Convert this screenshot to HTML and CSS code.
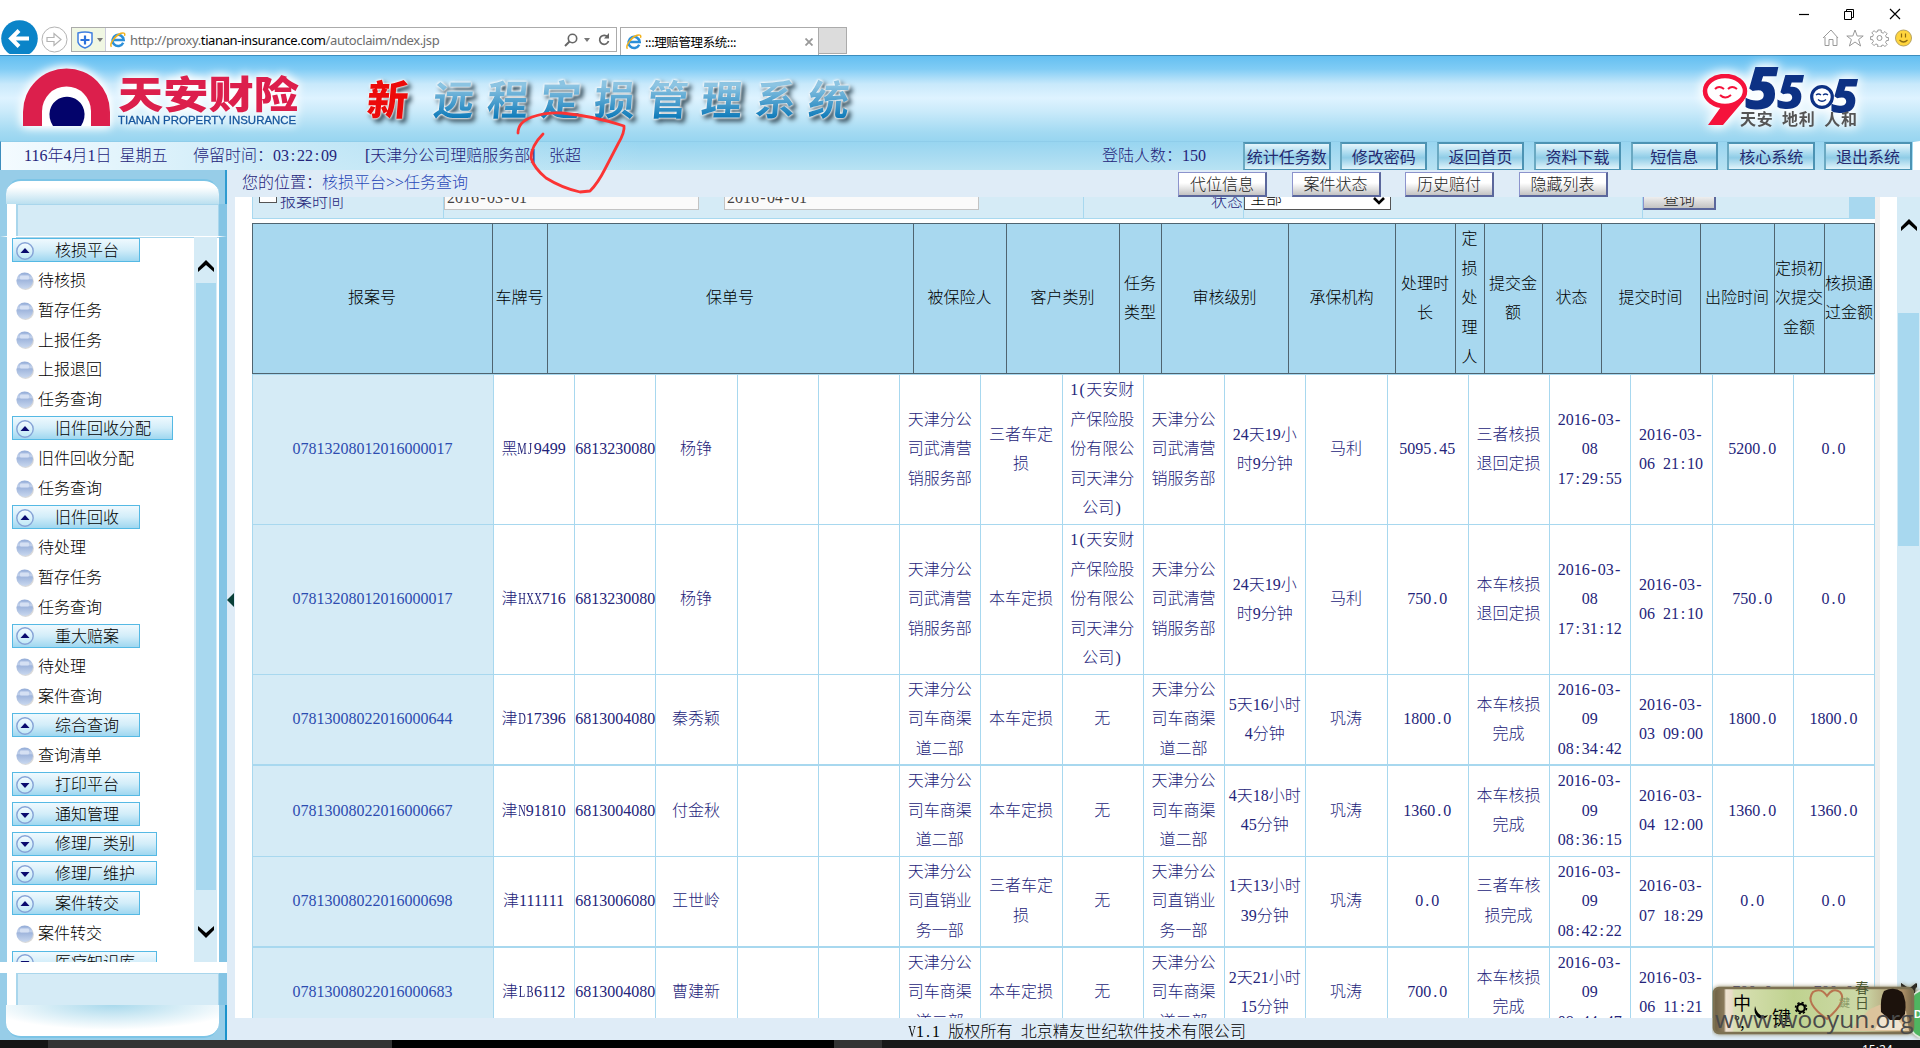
FILE: index.html
```html
<!DOCTYPE html>
<html lang="zh-CN">
<head>
<meta charset="utf-8">
<title>:::理赔管理系统:::</title>
<link rel="stylesheet" href="styles.css">
</head>
<body>
<svg class="defs" width="0" height="0">
  <defs>
    <linearGradient id="gBall" x1="0" y1="0" x2="0" y2="1"><stop offset="0" stop-color="#8fa9d6"/><stop offset=".35" stop-color="#c3d2ec"/><stop offset=".45" stop-color="#9fb5dc"/><stop offset="1" stop-color="#c9d8ef"/></linearGradient>
    <linearGradient id="gRing" x1="0" y1="0" x2="0" y2="1"><stop offset="0" stop-color="#f4fbff"/><stop offset="1" stop-color="#bfe8f6"/></linearGradient>
    <symbol id="ball" viewBox="0 0 18 18"><circle cx="9.5" cy="9.6" r="8.4" fill="#c9c9c9" opacity=".7"/><circle cx="8.7" cy="8.7" r="8.3" fill="url(#gBall)"/><rect x="4" y="3.5" width="9" height="4" rx="1" fill="#d5e0f3"/></symbol>
    <symbol id="up" viewBox="0 0 18 18"><circle cx="9" cy="9" r="8.2" fill="url(#gRing)" stroke="#86a3d6" stroke-width="1.4"/><path d="M4.500 11 9 6l4.500 5z" fill="#0a0a6e"/></symbol>
    <symbol id="down" viewBox="0 0 18 18"><circle cx="9" cy="9" r="8.200" fill="url(#gRing)" stroke="#86a3d6" stroke-width="1.4"/><path d="M4.500 7 9 12l4.500-5z" fill="#0a0a6e"/></symbol>
    <symbol id="ie" viewBox="0 0 16 16"><path d="M13.200 10.800A5.600 5.600 0 1 1 13.700 8H4" fill="none" stroke="#2b8fd9" stroke-width="2.500"/><path d="M1.500 14.800C-1 12 5 3.500 11 1.300c3-1 4.500 0 3.400 2.600" fill="none" stroke="#f2b21d" stroke-width="1.500"/></symbol>
    <symbol id="chevUp" viewBox="0 0 16 12"><path d="M0 12V8l8-8 8 8v4L8 5z" fill="#000"/></symbol>
    <symbol id="chevDown" viewBox="0 0 16 12"><path d="M0 0v4l8 8 8-8V0L8 7z" fill="#000"/></symbol>
  </defs>
</svg>

<div class="browser">
  <div class="nav-area">
    <svg class="back" width="37" height="34" viewBox="0 0 37 34"><circle cx="18.500" cy="18.500" r="18.300" fill="#0b84c8"/><path d="M28 18.500H10M18 10.500l-8 8 8 8" fill="none" stroke="#fff" stroke-width="4"/></svg>
    <svg class="fwd" width="27" height="27" viewBox="0 0 27 27"><circle cx="13.500" cy="13.500" r="12.500" fill="#fff" stroke="#b3b3b3"/><path d="M6 11.500h7V7.500l7 6-7 6v-4H6z" fill="none" stroke="#b3b3b3" stroke-width="1.200"/></svg>
    <div class="address">
      <div class="shield"><svg width="16" height="18" viewBox="0 0 16 18"><path d="M1 2q7-2 14 0v9q-1 4-7 6-6-2-7-6z" fill="#fff" stroke="#3f7fe0" stroke-width="1.500"/><path d="M8 4.500v9M3.500 9h9" stroke="#2d72dc" stroke-width="2.200"/></svg><b class="caret"></b></div>
      <svg class="ie" width="16" height="16"><use href="#ie"/></svg>
      <span class="url">http://proxy.<em>tianan-insurance.com</em>/autoclaim/ndex.jsp</span>
      <svg width="14" height="14" viewBox="0 0 14 14" class="glass"><circle cx="8.500" cy="5.500" r="4.200" fill="none" stroke="#666" stroke-width="1.600"/><path d="M5.500 8.500 1 13" stroke="#666" stroke-width="2"/></svg>
      <b class="caret dark"></b>
      <svg width="12" height="13" viewBox="0 0 12 13" class="reload"><path d="M10 4.500A4.500 4.500 0 1 0 10.500 8" fill="none" stroke="#666" stroke-width="1.700"/><path d="M11 0v5.500H6z" fill="#666"/></svg>
    </div>
    <div class="tab"><svg width="16" height="16"><use href="#ie"/></svg><span>:::理赔管理系统:::</span><svg class="close" width="8" height="8" viewBox="0 0 8 8"><path d="M.5.5l7 7M7.500.5l-7 7" stroke="#999" stroke-width="1.800"/></svg></div>
    <div class="newtab"></div>
  </div>
  <div class="window-tools">
    <svg width="110" height="14" viewBox="0 0 110 14"><path d="M3 7.500h10" stroke="#000" stroke-width="1.200"/><path d="M48.500 4.500h7v8h-7zM50.500 4.500v-2h7v8h-2" fill="none" stroke="#000"/><path d="M94 2l10 10M104 2 94 12" stroke="#000" stroke-width="1.200"/></svg>
    <svg width="92" height="18" viewBox="0 0 92 18"><g fill="none" stroke="#999"><path d="M1 9 9 1l7 8M3 8v8.500h4v-6h4v6h4V8"/><path d="M33 1l2.200 6h6l-4.600 3.500 2 6.500-5.600-4-5.600 4 2-6.500L24.800 7h6z"/><circle cx="57.500" cy="9" r="2.500"/><path d="M55.800 1h3.400v2.300l2 .9 1.700-1.700 2.300 2.300-1.600 1.700.8 2h2v3l-2 .1-.8 2 1.600 1.700-2.300 2.300-1.700-1.700-2 .9V18h-3.400v-2.200l-2-.9-1.700 1.700-2.300-2.300 1.600-1.700-.8-2h-2v-3h2l.8-2-1.600-1.700 2.300-2.300 1.700 1.700 2-.9z"/></g><circle cx="81.500" cy="9" r="8" fill="#ffd53e" stroke="#b6a262"/><path d="M79.500 4.500v4M83.500 4.500v4M77.500 11q4 4 8 0" stroke="#8b6a12" fill="none" stroke-width="1.200"/></svg>
  </div>
</div>

<header class="banner">
  <svg class="logo-mark" width="88" height="60" viewBox="0 0 88 60"><path d="M0 58V44a43.500 43.500 0 0 1 87 0v14H66V44a22 22 0 0 0-45 0v14z" fill="#dc1f4c"/><path d="M19 58V43a24 24 0 0 1 49 0v15z" fill="#fff"/><path d="M30 58q-5-8-3-16a17.500 17.500 0 0 1 34 0q2 8-3 16z" fill="#03036b"/></svg>
  <div class="brand"><div class="brand-cn">天安财险</div><div class="brand-en">TIANAN PROPERTY INSURANCE</div></div>
  <div class="sys-title"><span class="hot">新</span><span>远</span><span>程</span><span>定</span><span>损</span><span>管</span><span>理</span><span>系</span><span>统</span></div>
  <div class="hotline">
    <div class="digits">
      <svg class="nine" width="46" height="53" viewBox="0 0 46 53"><path d="M6 51 21 30 45 14Q46 22 38 31L21 51z" fill="#f5123b"/><ellipse cx="23" cy="17" rx="20" ry="15" fill="#fff" stroke="#f5123b" stroke-width="4.500"/><path d="M13 15q4-4 9 0M26 15q4-4 9 0M18 21q5 5 11 0" fill="none" stroke="#f5123b" stroke-width="2"/></svg>
      <span class="d5 a">5</span><span class="d5 b">5</span>
      <svg class="zero" width="28" height="24" viewBox="0 0 28 24"><circle cx="14" cy="12" r="10.300" fill="#fff" stroke="#0d3184" stroke-width="3.200"/><path d="M8 10q2.500-2 5 0M15 10q2.500-2 5 0M10 14.500q4 3.500 8 0" fill="none" stroke="#0d3184" stroke-width="1.300"/></svg>
      <span class="d5 c">5</span>
    </div>
    <div class="motto">天安&ensp;地利&ensp;人和</div>
  </div>
</header>

<div class="infobar">
  <span class="t-date">116年4月1日&ensp;星期五</span><span class="t-stay">停留时间：03<i>:</i>22<i>:</i>09</span><span class="t-dept">[天津分公司理赔服务部]</span><span class="t-user">张超</span><span class="t-count">登陆人数：150</span>
  <nav class="topnav"><a>统计任务数</a><a>修改密码</a><a>返回首页</a><a>资料下载</a><a>短信息</a><a>核心系统</a><a>退出系统</a></nav>
</div>

<div class="main">
  <aside class="side">
    <div class="cap-top"></div>
    <div class="box"></div>
    <div class="menu">
      <ul>
        <li class="h"><svg><use href="#up"/></svg><span>核损平台</span></li>
        <li><svg><use href="#ball"/></svg>待核损</li>
        <li><svg><use href="#ball"/></svg>暂存任务</li>
        <li><svg><use href="#ball"/></svg>上报任务</li>
        <li><svg><use href="#ball"/></svg>上报退回</li>
        <li><svg><use href="#ball"/></svg>任务查询</li>
        <li class="h w6"><svg><use href="#up"/></svg><span>旧件回收分配</span></li>
        <li><svg><use href="#ball"/></svg>旧件回收分配</li>
        <li><svg><use href="#ball"/></svg>任务查询</li>
        <li class="h"><svg><use href="#up"/></svg><span>旧件回收</span></li>
        <li><svg><use href="#ball"/></svg>待处理</li>
        <li><svg><use href="#ball"/></svg>暂存任务</li>
        <li><svg><use href="#ball"/></svg>任务查询</li>
        <li class="h"><svg><use href="#up"/></svg><span>重大赔案</span></li>
        <li><svg><use href="#ball"/></svg>待处理</li>
        <li><svg><use href="#ball"/></svg>案件查询</li>
        <li class="h"><svg><use href="#up"/></svg><span>综合查询</span></li>
        <li><svg><use href="#ball"/></svg>查询清单</li>
        <li class="h"><svg><use href="#down"/></svg><span>打印平台</span></li>
        <li class="h"><svg><use href="#down"/></svg><span>通知管理</span></li>
        <li class="h w5"><svg><use href="#down"/></svg><span>修理厂类别</span></li>
        <li class="h w5"><svg><use href="#down"/></svg><span>修理厂维护</span></li>
        <li class="h"><svg><use href="#up"/></svg><span>案件转交</span></li>
        <li><svg><use href="#ball"/></svg>案件转交</li>
        <li class="h w5"><svg><use href="#down"/></svg><span>医疗知识库</span></li>
      </ul>
      <div class="scroll"><svg class="arr"><use href="#chevUp"/></svg><div class="thumb"></div><svg class="arr"><use href="#chevDown"/></svg></div>
    </div>
    <div class="gap"></div>
    <div class="box"></div>
    <div class="cap-bottom"></div>
  </aside>
  <section class="content">
    <div class="crumb">您的位置：<a>核损平台&gt;&gt;任务查询</a>
      <div class="tools"><button>代位信息</button><button>案件状态</button><button>历史赔付</button><button>隐藏列表</button></div>
    </div>
    <div class="pane">
      <div class="split"><svg width="7" height="14" viewBox="0 0 7 14"><path d="M7 0v14L0 7z" fill="#0a4038"/></svg></div>
      <div class="work">
        <div class="filter">
          <div class="f1"><b class="check"></b>报案时间</div>
          <div class="f2"><span class="inp">2016<i>-</i>03<i>-</i>01</span><span class="inp">2016<i>-</i>04<i>-</i>01</span></div>
          <div class="f3">状态</div>
          <div class="f4"><span class="sel">全部<svg width="12" height="8" viewBox="0 0 12 8"><path d="M1 1l5 5 5-5" fill="none" stroke="#000" stroke-width="2.600"/></svg></span></div>
          <div class="f5"><span class="query">查询</span></div>
          <div class="f6"></div>
        </div>
        <table class="head">
          <colgroup><col style="width:240px"><col style="width:55px"><col style="width:366px"><col style="width:93px"><col style="width:113px"><col style="width:42px"><col style="width:127px"><col style="width:107px"><col style="width:60px"><col style="width:29px"><col style="width:58px"><col style="width:59px"><col style="width:99px"><col style="width:74px"><col style="width:50px"><col style="width:50px"></colgroup>
          <tr><th>报案号</th><th>车牌号</th><th>保单号</th><th>被保险人</th><th>客户类别</th><th>任务<br>类型</th><th>审核级别</th><th>承保机构</th><th>处理时<br>长</th><th>定<br>损<br>处<br>理<br>人</th><th>提交金<br>额</th><th>状态</th><th>提交时间</th><th>出险时间</th><th>定损初<br>次提交<br>金额</th><th>核损通<br>过金额</th></tr>
        </table>
        <table class="list">
          <colgroup><col class="c0"><col span="17" class="cn"></colgroup>
          <tr class="tall"><td>07813208012016000017</td><td>黑<u>M</u><u>J</u>9499</td><td>6813230080</td><td>杨铮</td><td></td><td></td><td>天津分公<br>司武清营<br>销服务部</td><td>三者车定<br>损</td><td>1<i>(</i>天安财<br>产保险股<br>份有限公<br>司天津分<br>公司<i>)</i></td><td>天津分公<br>司武清营<br>销服务部</td><td>24天19小<br>时9分钟</td><td>马利</td><td>5095<i>.</i>45</td><td>三者核损<br>退回定损</td><td>2016<i>-</i>03<i>-</i><br>08<br>17<i>:</i>29<i>:</i>55</td><td>2016<i>-</i>03<i>-</i><br>06<i></i>21<i>:</i>10</td><td>5200<i>.</i>0</td><td>0<i>.</i>0</td></tr>
          <tr class="tall"><td>07813208012016000017</td><td>津<u>H</u><u>X</u><u>X</u>716</td><td>6813230080</td><td>杨铮</td><td></td><td></td><td>天津分公<br>司武清营<br>销服务部</td><td>本车定损</td><td>1<i>(</i>天安财<br>产保险股<br>份有限公<br>司天津分<br>公司<i>)</i></td><td>天津分公<br>司武清营<br>销服务部</td><td>24天19小<br>时9分钟</td><td>马利</td><td>750<i>.</i>0</td><td>本车核损<br>退回定损</td><td>2016<i>-</i>03<i>-</i><br>08<br>17<i>:</i>31<i>:</i>12</td><td>2016<i>-</i>03<i>-</i><br>06<i></i>21<i>:</i>10</td><td>750<i>.</i>0</td><td>0<i>.</i>0</td></tr>
          <tr class="r3"><td>07813008022016000644</td><td>津<u>D</u>17396</td><td>6813004080</td><td>秦秀颖</td><td></td><td></td><td>天津分公<br>司车商渠<br>道二部</td><td>本车定损</td><td>无</td><td>天津分公<br>司车商渠<br>道二部</td><td>5天16小时<br>4分钟</td><td>巩涛</td><td>1800<i>.</i>0</td><td>本车核损<br>完成</td><td>2016<i>-</i>03<i>-</i><br>09<br>08<i>:</i>34<i>:</i>42</td><td>2016<i>-</i>03<i>-</i><br>03<i></i>09<i>:</i>00</td><td>1800<i>.</i>0</td><td>1800<i>.</i>0</td></tr>
          <tr class="r4"><td>07813008022016000667</td><td>津<u>N</u>91810</td><td>6813004080</td><td>付金秋</td><td></td><td></td><td>天津分公<br>司车商渠<br>道二部</td><td>本车定损</td><td>无</td><td>天津分公<br>司车商渠<br>道二部</td><td>4天18小时<br>45分钟</td><td>巩涛</td><td>1360<i>.</i>0</td><td>本车核损<br>完成</td><td>2016<i>-</i>03<i>-</i><br>09<br>08<i>:</i>36<i>:</i>15</td><td>2016<i>-</i>03<i>-</i><br>04<i></i>12<i>:</i>00</td><td>1360<i>.</i>0</td><td>1360<i>.</i>0</td></tr>
          <tr class="r3"><td>07813008022016000698</td><td>津111111</td><td>6813006080</td><td>王世岭</td><td></td><td></td><td>天津分公<br>司直销业<br>务一部</td><td>三者车定<br>损</td><td>无</td><td>天津分公<br>司直销业<br>务一部</td><td>1天13小时<br>39分钟</td><td>巩涛</td><td>0<i>.</i>0</td><td>三者车核<br>损完成</td><td>2016<i>-</i>03<i>-</i><br>09<br>08<i>:</i>42<i>:</i>22</td><td>2016<i>-</i>03<i>-</i><br>07<i></i>18<i>:</i>29</td><td>0<i>.</i>0</td><td>0<i>.</i>0</td></tr>
          <tr class="r4"><td>07813008022016000683</td><td>津<u>L</u><u>B</u>6112</td><td>6813004080</td><td>曹建新</td><td></td><td></td><td>天津分公<br>司车商渠<br>道二部</td><td>本车定损</td><td>无</td><td>天津分公<br>司车商渠<br>道二部</td><td>2天21小时<br>15分钟</td><td>巩涛</td><td>700<i>.</i>0</td><td>本车核损<br>完成</td><td>2016<i>-</i>03<i>-</i><br>09<br>08<i>:</i>44<i>:</i>47</td><td>2016<i>-</i>03<i>-</i><br>06<i></i>11<i>:</i>21</td><td>700<i>.</i>0</td><td>700<i>.</i>0</td></tr>
        </table>
      </div>
      <div class="edge"></div>
      <div class="mscroll"><svg class="arr"><use href="#chevUp"/></svg><div class="thumb"></div><svg class="arr"><use href="#chevDown"/></svg></div>
    </div>
    <footer><u>V</u>1<i>.</i>1<i></i>版权所有<i></i>北京精友世纪软件技术有限公司</footer>
  </section>
</div>
<div class="taskbar"><b></b><b></b><b></b><b></b><b></b><span>15:24</span></div>

<svg class="scribble" width="120" height="90" viewBox="510 108 120 90"><path d="M518 133Q518 122 532 117 546 112 562 113 594 116 624 126 625 132 618 144L605 169Q598 183 590 191L580 192Q562 188 546 178 534 168 531 158 531 146 543 134" fill="none" stroke="#fb3434" stroke-width="2.800" stroke-linecap="round" stroke-linejoin="round"/></svg>

<div class="ime">
  <svg width="208" height="60" viewBox="0 0 208 60">
    <defs><linearGradient id="gi" x1="0" x2="1"><stop offset="0" stop-color="#6d6044"/><stop offset=".05" stop-color="#8a7a5c"/><stop offset=".06" stop-color="#efe3d2"/><stop offset=".09" stop-color="#e9dcc8"/><stop offset=".1" stop-color="#d9e0b4"/><stop offset=".4" stop-color="#bfd28f"/><stop offset=".75" stop-color="#cdd9a8"/><stop offset=".95" stop-color="#a98d66"/><stop offset="1" stop-color="#7a6a4a"/></linearGradient></defs>
    <ellipse cx="212" cy="34" rx="17" ry="24" fill="#4fb560" stroke="#dfe8df" stroke-width="1.500"/>
    <path d="M189 3l6 4h4l5-4-1 10h-10z" fill="#2d2a24"/>
    <rect x="2" y="8" width="199" height="45" rx="5" fill="url(#gi)" stroke="#7d7152" stroke-width="2.500"/>
    <path d="M138 51q6-8 20-22l14-6 22 8 3 20z" fill="#dcc39c"/><path d="M163 50q4-12 12-18 12 6 18 18z" fill="#f0e4d0"/><path d="M172 11q10-5 18 1 5 8 3 22l-5 6h-10l-9-8q-1-14 3-21z" fill="#1c120c"/>
    <path d="M115 42Q92 26 101 15q8-5 14 4 6-9 13-4 8 9-13 27z" transform="translate(0 -3)" fill="none" stroke="#b8744f" stroke-width="2"/>
    <path d="M43 26q3 13 13 9-3 5-9 3-6-4-4-12z" fill="#000"/><circle cx="89" cy="28" r="3.800" fill="none" stroke="#000" stroke-width="2.200"/><circle cx="89" cy="28" r="5.500" fill="none" stroke="#000" stroke-width="1.600" stroke-dasharray="2.200 2.100"/>
  </svg>
  <span class="zh">中</span><span class="punct">°,</span><span class="key">键</span><span class="spring">春<br>日</span><span class="faint">鍵</span><span class="dee">D</span>
</div>
<div class="mark">www.wooyun.org</div>
</body>
</html>
```
FILE: styles.css
```css
* { box-sizing: border-box; }
body { margin: 0; width: 1920px; height: 1048px; overflow: hidden; position: relative; background: #fff; color: #24247a; font: 300 16px/29.600px "Liberation Serif", "Noto Sans CJK SC", serif; }
i { display: inline-block; width: 8px; font-style: normal; text-align: center; }
u { display: inline-flex; justify-content: center; width: 8px; text-decoration: none; transform: scaleX(.66); }
ul { list-style: none; margin: 0; padding: 0; }
svg { display: block; flex: none; }
.defs { position: absolute; }

.browser { height: 55px; display: flex; justify-content: space-between; }
.nav-area { display: flex; align-items: flex-start; padding: 20px 0 0 1px; }
.fwd { margin: 6px 0 0 3px; }
.address { width: 546px; height: 25px; margin: 7px 0 0 3px; border: 1px solid #ababab; display: flex; align-items: center; font: 13px/22px "Noto Sans", sans-serif; color: #6d6d6d; }
.shield { width: 34px; height: 23px; background: #f0f7e3; display: flex; align-items: center; padding-left: 5px; gap: 4px; border-right: 1px solid #ccd; }
.caret { border: 3px solid transparent; border-top: 4px solid #777; border-bottom: 0; }
.ie { margin-left: 4px; }
.url { margin-left: 4px; letter-spacing: -.38px; white-space: nowrap; width: 434px; }
.url em { font-style: normal; color: #000; }
.caret.dark { margin: 0 8px 0 6px; }
.tab { width: 199px; height: 28px; margin: 7px 0 0 3px; border: 1px solid #ababab; border-bottom: 0; display: flex; align-items: center; padding-left: 5px; gap: 3px; color: #000; font: 12.500px "Noto Sans CJK SC", sans-serif; }
.tab span { width: 157px; letter-spacing: -.4px; }
.newtab { width: 28px; height: 27px; margin-top: 7px; background: #dcdcdc; border: 1px solid #ababab; border-left: 0; }
.window-tools { width: 124px; padding: 7px 0 0; }
.window-tools svg + svg { margin: 8px 0 0 26px; }

.banner { height: 86px; border-top: 1px solid #3d8dbd; display: flex; background: linear-gradient(#64bff1 0, #80ccf5 13px, #c8e9fb 28px, #def3ff 42px, #c9eafa 56px, #a3daf2 76px, #98d5f0); }
.logo-mark { margin: 12px 0 0 23px; filter: drop-shadow(0 0 4px #fff) drop-shadow(0 0 5px #fff); }
.brand { width: 256px; padding: 17px 0 0 7px; flex: none; filter: drop-shadow(0 0 4px #fff) drop-shadow(0 0 4px #fff); }
.brand-cn { font: 900 38px/38px "Noto Sans CJK SC", sans-serif; color: #dc1f4c; transform: scaleX(1.190); transform-origin: 0 50%; }
.brand-en { font: 11.450px/14px "Liberation Sans", sans-serif; color: #16569d; -webkit-text-stroke: .3px #16569d; white-space: nowrap; margin-top: 2px; }
.sys-title { display: flex; width: 494px; flex: none; font: 700 41px/60px "Noto Sans CJK SC", serif; padding-top: 11px; filter: drop-shadow(0 0 1px #fff) drop-shadow(0 0 1px #fff) drop-shadow(3px 3px 2px #3b5361); }
.sys-title span { width: 53.600px; flex: none; background: linear-gradient(#8cc4e2 25%, #0a78b8 70%); -webkit-background-clip: text; background-clip: text; color: transparent; transform: skewX(-5deg); }
.sys-title .hot { width: 66px; background: none; color: #ec0a0a; font-weight: 900; }
.hotline { width: 170px; margin: 8px 0 0 841px; flex: none; filter: drop-shadow(0 0 5px #fff) drop-shadow(0 0 6px #fff); }
.digits { display: flex; height: 52px; align-items: flex-start; }
.nine { margin-top: 10px; }
.d5 { font: italic 900 54px/52px "Noto Sans", sans-serif; color: #0d3184; }
.d5.a { font-size: 58px; width: 32px; line-height: 45px; margin-left: -3px; }
.d5.b { font-size: 47px; width: 31px; line-height: 55px; }
.zero { margin: 21px 0 0; z-index: 1; }
.d5.c { font-size: 47px; line-height: 63px; margin-left: -5px; }
.motto { font: 700 16px/20px "Noto Sans CJK SC", sans-serif; color: #555; margin: -8px 0 0 38px; white-space: nowrap; letter-spacing: .7px; }

.infobar { height: 29px; display: flex; white-space: nowrap; line-height: 28px; padding-left: 23px; background: linear-gradient(90deg, #f4fbff, #cdebf8 260px, transparent 640px), linear-gradient(#98d5f0, #b8e2f3); border-top: 1px solid #8fcdea; border-left: 1px solid #3d8dbd; border-right: 7px solid #fff; }
.t-date { width: 169px; } .t-stay { width: 172px; } .t-dept { width: 184px; } .t-user { width: 553px; } .t-count { width: 141px; }
.topnav { display: flex; gap: 9.400px; }
.topnav a { width: 87.500px; height: 28px; border: 2px solid #4c93b3; border-left-color: #6aa9c2; border-bottom-width: 1px; text-align: center; line-height: 24px; font-weight: 400; font-family: "Noto Sans CJK SC", sans-serif; color: #252a70; background: linear-gradient(#e6f6fc, #9dd4eb 45%, #8fcce6 55%, #e2f4fb); }

.main { display: flex; height: 870px; }
.side { width: 227px; background: #fff; flex: none; display: flex; flex-direction: column; }
.cap-top { height: 34px; background: #97cde8; border-right: 2px solid #2f9bd0; padding: 9px 6px 0; }
.cap-top::before { content: ""; display: block; height: 25px; border-radius: 15px 15px 0 0; border-top: 2px solid #7cc4e6; background: linear-gradient(#fff 25%, #b3dcee); }
.box { height: 32px; border: solid #97cde8; border-width: 0 8px 0 7px; background: #fff; padding-left: 9px; }
.box::before { content: ""; display: block; height: 32px; background: #d5ebf6; border: 2px solid #a9d6ec; border-width: 1px 1px 1px 2px; }
.menu { height: 726px; border: solid #97cde8; border-width: 1px 8px 0 7px; border-top-color: #fff; padding-right: 2px; display: flex; justify-content: space-between; overflow: hidden; }
.box, .menu { box-shadow: 0 0 #0000; border-right-color: #84c4e4; }
.menu ul { padding: 1px 0 0 5px; color: #000; }
.menu li { height: 29.700px; display: flex; align-items: center; padding: 0 0 3px 4px; gap: 4px; white-space: nowrap; }
.menu li svg { width: 18px; height: 18px; }
.menu li.h { height: 24px; width: 128px; margin-bottom: 5.700px; padding: 1px 0 0 3px; gap: 21px; border: 1px solid #55b9e4; background: linear-gradient(#eff9fe, #d2edf9 50%, #9fd7f0); }
.menu li.h.w6 { width: 161px; } .menu li.h.w5 { width: 145px; }
.scroll { width: 23px; background: #d5ebf6; display: flex; flex-direction: column; align-items: center; padding-top: 23px; }
.arr { width: 16px; height: 12px; }
.scroll .thumb { width: 20px; height: 607px; background: #a8d8ef; margin: 11px 0 36px; flex: none; }
.gap { height: 11px; }
.cap-bottom { height: 35px; background: #97cde8; border-right: 2px solid #1a92cb; padding: 0 6px 4px; }
.cap-bottom::before { content: ""; display: block; height: 31px; border-radius: 0 0 15px 15px; border-bottom: 2px solid #7cc4e6; background: radial-gradient(ellipse 60% 80% at 50% 0, #a9d9ec, #fff); }

.content { flex: 1; display: flex; flex-direction: column; background: #dfecf7; min-width: 0; }
.crumb { height: 27px; line-height: 26px; padding-left: 15px; display: flex; flex: none; }
.crumb a { color: #2a49b8; width: 856px; }
.tools { display: flex; gap: 24.500px; padding-top: 2px; }
.tools button, .query { width: 89px; height: 25px; padding: 0; border: 1px solid #8c93cc; border-right: 2px solid #5b679c; border-bottom: 2px solid #5b679c; background: linear-gradient(#fff 45%, #c3c3c3); font: 300 16px/18px "Noto Sans CJK SC", sans-serif; color: #222; }
.tools button { padding-bottom: 3px; }
.pane { height: 821px; display: flex; background: #fff; }
.split { width: 8px; background: #dfecf7; display: flex; align-items: center; padding-bottom: 15px; }
.work { width: 1623px; margin-left: 17px; overflow: hidden; height: 821px; }
.filter { height: 22px; display: flex; border: solid #a8d8ef; border-width: 0 1px 1px; overflow: hidden; background: #d5ebf6; }
.filter > div { flex: none; height: 22px; border-right: 1px solid #a8d8ef; line-height: 16px; overflow: hidden; white-space: nowrap; }
.f1 { width: 191px; display: flex; gap: 3px; padding-left: 6px; }
.filter > .f1, .filter > .f3 { line-height: 10px; }
.check { width: 18px; height: 16px; margin-top: -10px; border: 1px solid #555; background: #fff; }
.f2 { width: 640px; display: flex; gap: 25px; padding-left: 0; }
.inp { width: 255px; height: 13px; border: 1px solid #c3c3c3; border-top: 0; background: #fafafa; color: #444; line-height: 2px; padding-left: 2px; }
.f3 { width: 160px; text-align: right; }
.f4 { width: 399px; }
.sel { display: flex; width: 147px; height: 13px; border: 1px solid #555; border-top: 0; background: #fff; color: #000; line-height: 3px; padding: 0 5px; justify-content: space-between; }
.f5 { width: 207px; }
.query { display: block; width: 73px; height: 13px; border-top: 0; text-align: center; line-height: 2px; background: linear-gradient(#eee, #c3c3c3); }
.filter > .f6 { flex: 1; background: #a8d8ef; }
table { border-collapse: collapse; table-layout: fixed; line-height: 29.400px; }
.head { width: 1623px; margin-top: 4px; height: 151px; background: #a8d8ef; color: #000; }
.head th { font-weight: 300; border: 1px solid #4f6470; padding: 0 1px 1px 0; text-align: center; white-space: nowrap; }
.list { width: 1623px; }
.c0 { width: 241px; }
.list td { border: 1px solid #a8d8ef; padding: 0 1px 1px 0; text-align: center; white-space: nowrap; height: 90px; }
.list td:nth-child(3) { padding-right: 0; }
.list tr.tall td { height: 150px; }
.list tr.r3 td { height: 90px; border-bottom-width: 2px; }
.list tr.r4 td { height: 91px; }
.list td:first-child { background: #d5ebf6; color: #2d4cb0; }
.edge { width: 5px; background: #f0f0f0; margin-right: 17px; }
.mscroll { width: 23px; background: #d5ebf6; display: flex; flex-direction: column; align-items: center; padding-top: 22px; }
.mscroll .thumb { width: 21px; height: 233px; background: #a8d8ef; margin: 82px 0 437px; flex: none; }
footer { height: 22px; padding-left: 681px; line-height: 28px; letter-spacing: .1px; color: #000; white-space: nowrap; overflow: hidden; }

.taskbar { height: 8px; display: flex; background: #141414; overflow: hidden; }
.taskbar b:nth-child(1) { width: 48px; background: #151515; } .taskbar b:nth-child(2) { width: 344px; background: #333; } .taskbar b:nth-child(3) { width: 442px; background: #000; } .taskbar b:nth-child(4) { width: 48px; background: #333; } .taskbar b:nth-child(5) { width: 980px; background: #181818; }
.taskbar span { color: #fff; font: 12px/14px "Noto Sans", sans-serif; padding-top: 3px; }

.scribble { position: absolute; left: 510px; top: 108px; }
.ime { position: absolute; left: 1712px; top: 980px; width: 208px; height: 60px; overflow: hidden; color: #000; }
.ime svg { filter: drop-shadow(0 0 2px #8a835e); }
.ime span { position: absolute; font-weight: 400; font-family: "Noto Sans CJK SC", sans-serif; }
.ime .zh { left: 21px; top: 8px; font-size: 18px; }
.ime .punct { left: 22px; top: 27px; font-size: 16px; }
.ime .key { left: 60px; top: 22px; font-size: 19px; }
.ime .spring { left: 143px; top: 0; font-size: 14px; line-height: 15px; color: #4d5a33; }
.ime .faint { left: 127px; top: 8px; font-size: 11px; color: #8a9a68; }
.ime .dee { left: 202px; top: 20px; font: 700 11px/29px "Liberation Sans", sans-serif; color: #fff; }
.mark { position: absolute; left: 1715px; top: 1002px; font: 400 24.500px/34px "Open Sans", sans-serif; color: #4a4a4a; white-space: nowrap; }
```
